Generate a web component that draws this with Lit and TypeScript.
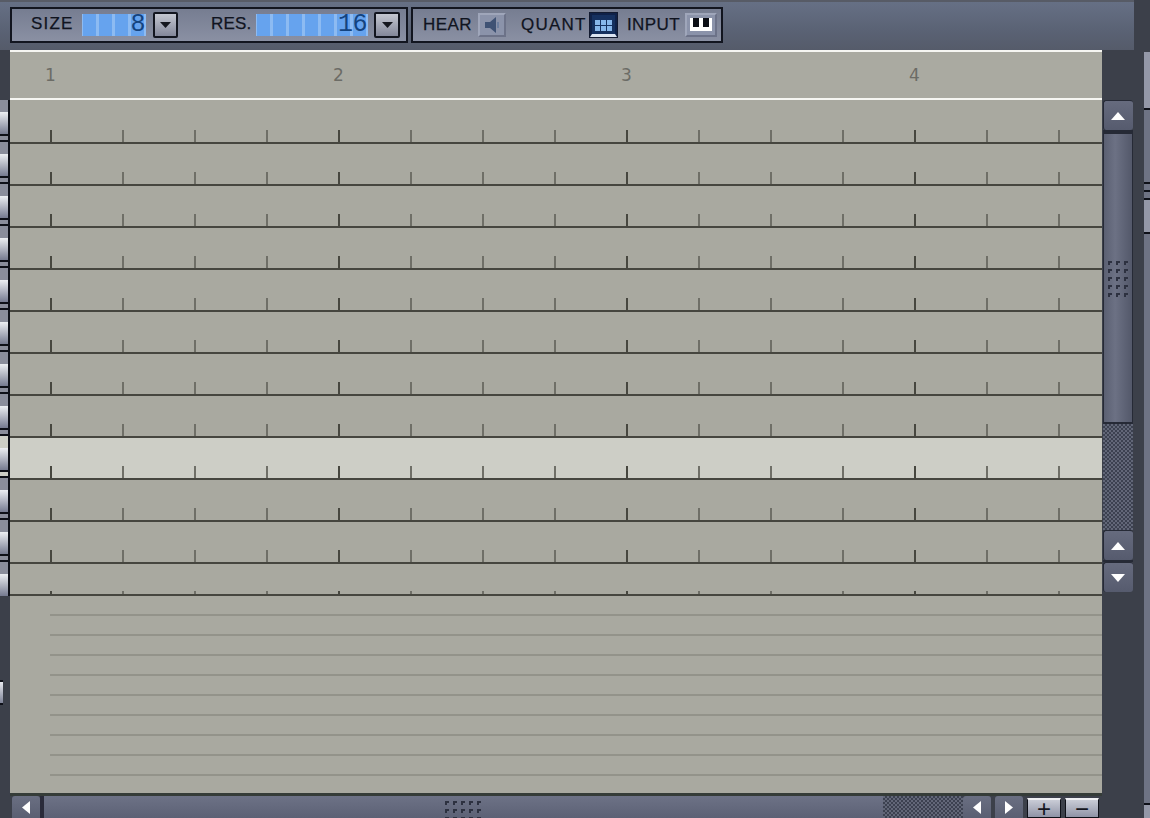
import { LitElement, html, css, svg } from "lit";
import { customElement } from "lit/decorators.js";

const tri = (d: "up" | "down" | "left" | "right", fill = "#fff", w = 14, h = 8) => {
  const pts: Record<string, string> = {
    up: `0,${h} ${w / 2},0 ${w},${h}`,
    down: `0,0 ${w},0 ${w / 2},${h}`,
    left: `${w},0 ${w},${h} 0,${h / 2}`,
    right: `0,0 0,${h} ${w},${h / 2}`,
  };
  return html`<svg width=${w} height=${h} viewBox="0 0 ${w} ${h}"><polygon points=${pts[d]} fill=${fill}></polygon></svg>`;
};

const grip = (cols: number, rows: number, dx: number, dy: number) => {
  const w = (cols - 1) * dx + 4;
  const h = (rows - 1) * dy + 4;
  const dots = [];
  for (let r = 0; r < rows; r++)
    for (let c = 0; c < cols; c++)
      dots.push(svg`<path d="M${c * dx} ${r * dy}h4v2h-2v2h-2z" fill="#2d3140"></path>`);
  return html`<svg width=${w} height=${h} viewBox="0 0 ${w} ${h}">${dots}</svg>`;
};

const TICKS = Array.from({ length: 15 }, (_, i) => i);
const ROWS = [44, 42, 42, 42, 42, 42, 42, 42, 42, 42, 42];

@customElement("app-root")
export class AppRoot extends LitElement {
  static styles = css`
    :host {
      display: block;
      width: 1150px;
      height: 818px;
      overflow: hidden;
      background: #3c404a;
      font-family: "DejaVu Sans", "Liberation Sans", sans-serif;
    }
    .toolbar {
      box-sizing: border-box;
      width: 1134px;
      height: 50px;
      display: flex;
      padding: 5px 0 0 10px;
      gap: 3px;
      border-top: 2px solid #575b66;
      background: linear-gradient(180deg, #667085 0%, #5a6274 60%, #555b6a 100%);
      align-items: flex-start;
    }
    .group {
      box-sizing: border-box;
      height: 36px;
      display: flex;
      align-items: center;
      border: 2px solid #12151f;
      background: linear-gradient(180deg, #767d91, #8a90a3);
      color: #10141f;
      font-family: "Liberation Sans", sans-serif;
      font-size: 17px;
      letter-spacing: 0.4px;
      -webkit-text-stroke: 0.25px #10141f;
    }
    .g1 { width: 398px; padding-left: 19px; }
    .g2 { width: 312px; padding-left: 10px; }
    .label { flex: none; padding-bottom: 3px; white-space: nowrap; }
    .hear-l { width: 55px; padding-bottom: 0; }
    .quant-l { width: 69px; padding-bottom: 0; letter-spacing: 1.2px; }
    .input-l { width: 58px; padding-bottom: 0; }
    .size-l { width: 51px; letter-spacing: 1.2px; }
    .res-l { width: 45px; margin-left: 33px; letter-spacing: 0.2px; }
    .lcd {
      flex: none;
      height: 22px;
      display: grid;
      background: #8dbbf2;
      margin-right: 7px;
    }
    .lcd-res { margin-right: 6px; }
    .cells, .digit { grid-area: 1 / 1; }
    .cells { display: flex; gap: 3px; padding: 0 1px; }
    .cell { flex: none; width: 13px; background: #66a3ee; }
    .digit {
      text-align: right;
      color: #14437f;
      font-family: "Liberation Mono", monospace;
      font-size: 25px;
      line-height: 22px;
      letter-spacing: -0.5px;
      padding-right: 1px;
      -webkit-text-stroke: 0;
    }
    .drop {
      box-sizing: border-box;
      flex: none;
      width: 26px;
      height: 26px;
      border: 2px solid #12151f;
      border-radius: 2px;
      background: linear-gradient(180deg, #c4c7d1, #83879a);
      display: flex;
      align-items: center;
      justify-content: center;
    }
    .drop.first { width: 25px; }
    .tbtn {
      box-sizing: border-box;
      flex: none;
      height: 24px;
      display: flex;
      align-items: center;
      justify-content: center;
      background: #8b93aa;
      border: 2px solid #9fa6ba;
      border-bottom-color: #6c7288;
      border-right-color: #6c7288;
    }
    .hear { width: 28px; margin-right: 15px; }
    .quant {
      width: 27px;
      margin-right: 10px;
      background: #15305f;
      border: 2px solid #0f2148;
      border-bottom: 3px solid #dbe4f2;
      outline: 1px solid #121a30;
    }
    .input { width: 32px; }

    .body { display: flex; height: 768px; }
    .left {
      flex: none;
      width: 10px;
      display: flex;
      flex-direction: column;
    }
    .left-top { flex: none; height: 50px; }
    .keys {
      box-sizing: border-box;
      flex: none;
      height: 496px;
      background: #8a8d9b;
      border-right: 2px solid #0e1018;
      display: flex;
      flex-direction: column;
      overflow: hidden;
    }
    .k-pad { flex: none; height: 12px; }
    .k-pad.hi, .k-gap.hi { background: #cdcec6; }
    .key {
      flex: none;
      height: 22px;
      background: linear-gradient(180deg, #eceef2, #757a90);
    }
    .k-line { flex: none; height: 2px; background: #0e1018; }
    .k-gap { flex: none; height: 4px; }
    .left-low { flex: 1; padding-top: 84px; }
    .lone {
      box-sizing: border-box;
      width: 3px;
      height: 25px;
      background: linear-gradient(180deg, #e6e8ee, #7d8296);
      border-top: 2px solid #0e1018;
      border-bottom: 2px solid #0e1018;
    }

    .main {
      flex: none;
      width: 1092px;
      background: #a9a9a0;
      display: flex;
      flex-direction: column;
    }
    .ruler {
      box-sizing: border-box;
      flex: none;
      height: 50px;
      border-top: 2px solid #f6f6f2;
      border-bottom: 2px solid #f6f6f2;
      display: flex;
      padding-left: 35px;
      background: #aaaaa1;
    }
    .bar {
      flex: none;
      width: 288px;
      padding-top: 12px;
      font-size: 17px;
      line-height: 22px;
      color: #6c6c66;
    }
    .row {
      box-sizing: border-box;
      flex: none;
      display: flex;
      align-items: flex-end;
      padding-left: 40px;
      border-bottom: 2px solid #46463f;
      overflow: hidden;
    }
    .row.hi { background: #cdcec6; }
    .tick {
      box-sizing: border-box;
      flex: none;
      width: 72px;
      height: 12px;
      border-left: 2px solid #6f6f67;
    }
    .tick.major { border-left-color: #47473f; }
    .row.short .tick { height: 3px; }
    .lower {
      box-sizing: border-box;
      flex: none;
      height: 197px;
      padding: 18px 0 0 40px;
      display: flex;
      flex-direction: column;
      gap: 18px;
    }
    .lower div { flex: none; height: 2px; background: #93938a; }

    .hscroll {
      flex: 1;
      min-height: 0;
      border-top: 3px solid #353c38;
      padding-left: 2px;
      display: flex;
      background: #3c404a;
    }
    .h-btn {
      box-sizing: border-box;
      flex: none;
      width: 28px;
      display: flex;
      align-items: center;
      justify-content: center;
      background: linear-gradient(180deg, #6a6f82, #5a5f72);
      border-radius: 3px 3px 0 0;
    }
    .h-sep { flex: none; width: 4px; background: #2a2b3a; }
    .h-thumb {
      box-sizing: border-box;
      flex: none;
      width: 839px;
      background: linear-gradient(180deg, #6d7286, #5c6175);
      display: flex;
      justify-content: center;
      padding: 5px 1px 0 0;
    }
    .check {
      background-color: #3f4352;
      background-image: repeating-conic-gradient(#3c4150 0 25%, #626778 0 50%);
      background-size: 4px 4px;
    }
    .h-check { flex: none; width: 80px; }
    .h-gap { flex: none; width: 4px; }
    .zoom {
      box-sizing: border-box;
      flex: none;
      width: 34px;
      height: 20px;
      margin-top: 2px;
      border: 1px solid #0e1018;
      border-top: 2px solid #f0f1f4;
      background: linear-gradient(180deg, #c9ccd6, #8f93a6);
      color: #141620;
      text-align: center;
      font: 400 24px/17px "Liberation Sans", sans-serif;
    }
    .zoom + .zoom { margin-left: 4px; }

    .vscroll {
      box-sizing: border-box;
      flex: none;
      width: 32px;
      padding: 50px 1px 0 1px;
      display: flex;
      flex-direction: column;
    }
    .v-btn {
      box-sizing: border-box;
      flex: none;
      height: 30px;
      padding-right: 2px;
      display: flex;
      align-items: center;
      justify-content: center;
      background: linear-gradient(180deg, #666b7e, #565b6e);
      border-radius: 3px;
      border-top: 1px solid #262a36;
      border-left: 1px solid #262a36;
    }
    .v-sep { flex: none; height: 4px; background: #262a36; }
    .v-thumb {
      box-sizing: border-box;
      flex: none;
      height: 290px;
      padding: 127px 1px 0 0;
      display: flex;
      justify-content: center;
      background: linear-gradient(90deg, #5b6072, #6c7184 40%, #53586a);
      border-left: 1px solid #262a36;
      border-right: 1px solid #262a36;
      border-bottom: 2px solid #262a36;
    }
    .v-check { flex: none; height: 106px; }
    .v-gap { flex: none; height: 2px; background: #262a36; }
    .far-gap { flex: none; width: 10px; }
    .far {
      flex: none;
      width: 6px;
      padding-top: 2px;
      display: flex;
      flex-direction: column;
    }
    .seg { flex: none; background: #9498a8; }
    .seg.dim { background: #6e7384; }
    .seg.line { height: 2px; background: #0e1018; }
  `;

  private speaker() {
    return html`<svg width="18" height="16" viewBox="0 0 18 16">
      <path d="M2 5h5l6-5v16l-6-5H2z" fill="#3f5274"></path>
      <path d="M15 5v6" stroke="#6d7f9f" stroke-width="2"></path>
    </svg>`;
  }

  private quantIcon() {
    const cells = [];
    for (let r = 0; r < 2; r++)
      for (let c = 0; c < 3; c++)
        cells.push(svg`<rect x=${2 + c * 6} y=${2 + r * 6} width="5" height="5" fill="#86b6ea"></rect>`);
    return html`<svg width="21" height="14" viewBox="0 0 21 14">
      <rect width="21" height="14" fill="#15305f"></rect>
      ${cells}
    </svg>`;
  }

  private pianoIcon() {
    return html`<svg width="22" height="14" viewBox="0 0 22 14">
      <rect width="22" height="14" fill="#fff"></rect>
      <rect x="3" y="0" width="6" height="9" fill="#0c0e16"></rect>
      <rect x="13" y="0" width="6" height="9" fill="#0c0e16"></rect>
      <rect x="0" y="13" width="22" height="1" fill="#8b93aa"></rect>
    </svg>`;
  }

  private lcd(cells: number, value: string, width: number, cls = "") {
    return html`<div class="lcd ${cls}" style="width:${width}px">
      <div class="cells">${Array.from({ length: cells }, () => html`<div class="cell"></div>`)}</div>
      <div class="digit">${value}</div>
    </div>`;
  }

  private keyColumn() {
    const out = [html`<div class="k-pad"></div>`];
    for (let i = 0; i < 12; i++) {
      const hi = i === 8;
      out.push(html`<div class="key"></div><div class="k-line"></div>
        <div class="k-gap ${hi ? "hi" : ""}"></div><div class="k-line"></div>
        <div class="k-pad ${i === 7 ? "hi" : ""}"></div>`);
    }
    return out;
  }

  render() {
    return html`
      <div class="toolbar">
        <div class="group g1">
          <span class="label size-l">SIZE</span>
          ${this.lcd(4, "8", 64)}
          <div class="drop first">${tri("down", "#15171f", 11, 6)}</div>
          <span class="label res-l">RES.</span>
          ${this.lcd(7, "16", 112, "lcd-res")}
          <div class="drop">${tri("down", "#15171f", 11, 6)}</div>
        </div>
        <div class="group g2">
          <span class="label hear-l">HEAR</span>
          <div class="tbtn hear">${this.speaker()}</div>
          <span class="label quant-l">QUANT</span>
          <div class="tbtn quant">${this.quantIcon()}</div>
          <span class="label input-l">INPUT</span>
          <div class="tbtn input">${this.pianoIcon()}</div>
        </div>
      </div>
      <div class="body">
        <div class="left">
          <div class="left-top"></div>
          <div class="keys">${this.keyColumn()}</div>
          <div class="left-low"><div class="lone"></div></div>
        </div>
        <div class="main">
          <div class="ruler">
            ${["1", "2", "3", "4"].map((n) => html`<div class="bar">${n}</div>`)}
          </div>
          ${ROWS.map(
            (h, i) => html`<div class="row ${i === 8 ? "hi" : ""}" style="height:${h}px">
              ${TICKS.map((t) => html`<div class="tick ${t % 4 === 0 ? "major" : ""}"></div>`)}
            </div>`
          )}
          <div class="row short" style="height:32px">
            ${TICKS.map((t) => html`<div class="tick ${t % 4 === 0 ? "major" : ""}"></div>`)}
          </div>
          <div class="lower">${Array.from({ length: 9 }, () => html`<div></div>`)}</div>
          <div class="hscroll">
            <div class="h-btn">${tri("left", "#fff", 8, 13)}</div>
            <div class="h-sep"></div>
            <div class="h-thumb">${grip(5, 3, 8, 8)}</div>
            <div class="h-check check"></div>
            <div class="h-btn">${tri("left", "#fff", 8, 13)}</div>
            <div class="h-gap"></div>
            <div class="h-btn">${tri("right", "#fff", 8, 13)}</div>
            <div class="h-gap"></div>
            <div class="zoom">+</div>
            <div class="zoom">−</div>
          </div>
        </div>
        <div class="vscroll">
          <div class="v-btn">${tri("up")}</div>
          <div class="v-sep"></div>
          <div class="v-thumb">${grip(3, 5, 8, 8)}</div>
          <div class="v-check check"></div>
          <div class="v-btn">${tri("up")}</div>
          <div class="v-gap"></div>
          <div class="v-btn">${tri("down")}</div>
        </div>
        <div class="far-gap"></div>
        <div class="far">
          <div class="seg" style="height:56px"></div>
          <div class="seg line"></div>
          <div class="seg dim" style="height:72px"></div>
          <div class="seg line"></div>
          <div class="seg dim" style="height:6px"></div>
          <div class="seg line"></div>
          <div class="seg dim" style="height:6px"></div>
          <div class="seg line"></div>
          <div class="seg" style="height:32px"></div>
          <div class="seg line"></div>
          <div class="seg dim" style="height:569px"></div>
          <div class="seg line"></div>
          <div class="seg" style="height:14px"></div>
        </div>
      </div>
    `;
  }
}
